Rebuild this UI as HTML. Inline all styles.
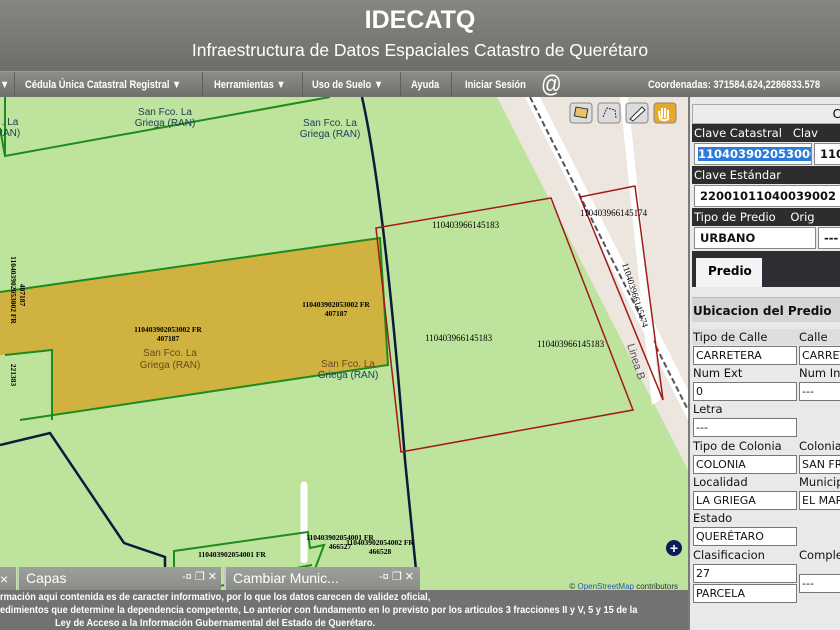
<!DOCTYPE html>
<html><head><meta charset="utf-8"><style>
*{margin:0;padding:0;box-sizing:border-box}
body{width:840px;height:630px;overflow:hidden;font-family:"Liberation Sans",sans-serif;background:#6e6f6a;position:relative}
#hdr{position:absolute;left:0;top:0;width:840px;height:71px;background:linear-gradient(#868782,#6d6e69);color:#fff;text-align:center}
#hdr h1{position:absolute;left:0;right:0;top:6px;font-size:25px;font-weight:bold}
#hdr h2{position:absolute;left:0;right:0;top:40px;font-size:17.5px;font-weight:normal}
#nav{position:absolute;left:0;top:71px;width:840px;height:26px;background:linear-gradient(#8d8e89,#6f706b);color:#fff;font-size:11px;font-weight:bold;border-top:1px solid #999}
#nav span{position:absolute;top:7px;transform:scaleX(.85);transform-origin:left;white-space:nowrap}
#nav i{position:absolute;top:0;width:1px;height:26px;background:#5f605b}
#map{position:absolute;left:0;top:97px;width:688px;height:493px;overflow:hidden}
#foot{position:absolute;left:0;top:590px;width:688px;height:40px;background:#727370;color:#fff;font-size:10.5px;font-weight:bold;line-height:13px}
#foot div{position:absolute;white-space:nowrap;transform:scaleX(.88);transform-origin:left}
.win{position:absolute;top:567px;height:23px;background:linear-gradient(#9ea09c,#8a8c88);color:#fff;font-size:14px;border-left:2px solid #bfc9c7}
#panel{position:absolute;left:688px;top:97px;width:152px;height:533px;background:#e9e9e9;border-left:2px solid #7a7a7a;overflow:hidden;font-family:"DejaVu Sans",sans-serif;font-size:11.5px}
.dk{position:absolute;left:2px;width:150px;height:18px;background:#2d2d2d;color:#fff;line-height:18px;padding-left:2px;white-space:nowrap}
.in{position:absolute;height:22px;background:#fff;border:1px solid #888;font-weight:bold;line-height:20px;padding-left:5px;color:#111;overflow:hidden;white-space:nowrap}
.lb{position:absolute;color:#111;font-size:11.5px;white-space:nowrap}
.fi{position:absolute;height:19px;background:#fff;border:1px solid #777;color:#111;font-size:11px;line-height:17px;padding-left:2px;white-space:nowrap;overflow:hidden}
</style></head><body>
<div id="hdr"><h1>IDECATQ</h1><h2>Infraestructura de Datos Espaciales Catastro de Querétaro</h2></div>
<div id="nav">
<span style="left:0">▼</span><i style="left:14px"></i>
<span style="left:25px">Cédula Única Catastral Registral ▼</span><i style="left:202px"></i>
<span style="left:214px">Herramientas ▼</span><i style="left:302px"></i>
<span style="left:312px">Uso de Suelo ▼</span><i style="left:400px"></i>
<span style="left:411px">Ayuda</span><i style="left:451px"></i>
<span style="left:465px">Iniciar Sesión</span>
<span style="left:541px;top:-1px;font-size:24px;font-weight:normal">@</span>
<span style="left:648px">Coordenadas: 371584.624,2286833.578</span>
</div>
<div id="map">
<svg width="688" height="493" viewBox="0 97 688 493" font-family="Liberation Serif">
<rect x="0" y="97" width="688" height="493" fill="#bde39c"/>
<polygon points="497,97 688,97 688,470" fill="#ece6df"/>
<polygon points="525,97 540,97 688,390 688,420" fill="#fff"/>
<line x1="530" y1="97" x2="688" y2="410" stroke="#555" stroke-width="2" stroke-dasharray="6,3"/>
<polygon points="620,97 628,97 660,400 652,405" fill="#fff"/>
<line x1="304" y1="485" x2="304" y2="560" stroke="#fff" stroke-width="7" stroke-linecap="round"/>
<polygon points="0,292 380,238 388,365 20,420 0,420" fill="#cfb23f"/>
<polygon points="0,355 52,350 52,420 0,425" fill="#bde39c"/>
<polyline points="0,292 380,238 388,365 20,420" fill="none" stroke="#1d8c1d" stroke-width="2"/>
<polyline points="0,128 5,156 330,97" fill="none" stroke="#1d8c1d" stroke-width="2"/>
<polyline points="5,355 52,350 52,420" fill="none" stroke="#1d8c1d" stroke-width="2"/>
<polyline points="5,97 5,156" fill="none" stroke="#1d8c1d" stroke-width="2"/>
<polyline points="174,590 174,551 308,532 310,548 324,545 312,577 174,590" fill="none" stroke="#1d8c1d" stroke-width="2"/>
<polyline points="245,578 312,565" fill="none" stroke="#1d8c1d" stroke-width="2"/>
<path d="M362,97 Q385,200 405,460 L418,590" fill="none" stroke="#0d1a3a" stroke-width="2.5"/>
<polyline points="0,445 50,433 124,543 165,557 165,590" fill="none" stroke="#0d1a3a" stroke-width="2.5"/>
<polygon points="376,228 551,198 633,410 401,452" fill="none" stroke="#a01a1a" stroke-width="1.5"/>
<polygon points="580,197 635,186 663,400" fill="none" stroke="#a01a1a" stroke-width="1.5"/>
<g font-size="9" fill="#000">
<text x="432" y="228">110403966145183</text>
<text x="425" y="341">110403966145183</text>
<text x="537" y="347">110403966145183</text>
<text x="580" y="216">110403966145174</text>
<text transform="translate(622,264) rotate(72)">110403966145174</text>
<g font-weight="bold" font-size="7.5" text-anchor="middle">
<text x="168" y="332">110403902053002 FR</text><text x="168" y="341">407187</text>
<text x="336" y="307">110403902053002 FR</text><text x="336" y="316">407187</text>
<text x="232" y="557">110403902054001 FR</text>
<text x="340" y="540">110403902054001 FR</text><text x="340" y="549">466527</text>
<text x="380" y="545">110403902054002 FR</text><text x="380" y="554">466528</text>
<text transform="translate(11,290) rotate(90)">110403902053002 FR</text>
<text transform="translate(20,295) rotate(90)">407187</text>
<text transform="translate(11,375) rotate(90)">221383</text>
</g></g>
<g font-family="Liberation Sans" font-size="10" text-anchor="middle">
<text x="165" y="115" fill="#1c3c5c">San Fco. La</text><text x="165" y="126" fill="#1c3c5c">Griega (RAN)</text>
<text x="330" y="126" fill="#1c3c5c">San Fco. La</text><text x="330" y="137" fill="#1c3c5c">Griega (RAN)</text>
<text x="10" y="125" fill="#1c3c5c">. La</text><text x="8" y="136" fill="#1c3c5c">RAN)</text>
<text x="170" y="356" fill="#6b4a1a">San Fco. La</text><text x="170" y="368" fill="#6b4a1a">Griega (RAN)</text>
<text x="348" y="367" fill="#6b4a1a">San Fco. La</text><text x="348" y="378" fill="#1c3c5c">Griega (RAN)</text>
</g>
<text transform="translate(627,345) rotate(72)" font-family="Liberation Sans" font-size="11" fill="#555">Linea B</text>
<g transform="translate(570,103)">
<rect width="22" height="20" rx="3" fill="#ddd" stroke="#888"/><rect x="5" y="5" width="12" height="9" fill="#e9c36a" stroke="#333" transform="rotate(10 11 10)"/>
<rect x="28" width="22" height="20" rx="3" fill="#ddd" stroke="#888"/><path d="M33,14 L37,5 L45,7 L46,15" fill="none" stroke="#333" stroke-dasharray="2,1"/>
<rect x="56" width="22" height="20" rx="3" fill="#ddd" stroke="#888"/><path d="M60,16 L72,4 L75,7 L63,18Z" fill="#fff" stroke="#333"/>
<rect x="84" width="22" height="20" rx="3" fill="#e8a92a" stroke="#888"/><path d="M90,16 L89,8 M92,15 L92,5 M95,15 L95,5 M98,15 L98,7 M90,16 Q95,19 99,15" stroke="#fff" stroke-width="2" fill="none"/>
</g>
<circle cx="674" cy="548" r="8" fill="#0d1a5a"/><text x="674" y="553" fill="#fff" font-size="14" font-weight="bold" text-anchor="middle" font-family="Liberation Sans">+</text>
<text x="678" y="589" font-family="Liberation Sans" font-size="8" fill="#333" text-anchor="end">© <tspan fill="#2a5aa8">OpenStreetMap</tspan> contributors</text>
</svg>
</div>
<div class="win" style="left:0;width:16px;border:none"><span style="position:absolute;left:0;top:4px">×</span></div>
<div class="win" style="left:17px;width:204px"><span style="position:absolute;left:7px;top:3px">Capas</span><span style="position:absolute;left:163px;top:3px;font-size:11px">-¤ ❐ ✕</span></div>
<div class="win" style="left:224px;width:196px"><span style="position:absolute;left:7px;top:3px">Cambiar Munic...</span><span style="position:absolute;left:153px;top:3px;font-size:11px">-¤ ❐ ✕</span></div>
<div id="foot">
<div style="left:0;top:1px">rmación aqui contenida es de caracter informativo, por lo que los datos carecen de validez oficial,</div>
<div style="left:0;top:14px">edimientos que determine la dependencia competente, Lo anterior con fundamento en lo previsto por los articulos 3 fracciones II y V, 5 y 15 de la</div>
<div style="left:55px;top:27px">Ley de Acceso a la Información Gubernamental del Estado de Querétaro.</div>
</div>
<div id="panel">
<div style="position:absolute;left:2px;top:7px;width:150px;height:20px;background:#ececec;border:1px solid #aaa;text-align:right;line-height:18px;font-size:12px">C</div>
<div class="dk" style="top:27px">Clave Catastral&nbsp;&nbsp;&nbsp;Clav</div>
<div class="in" style="left:4px;top:46px;width:118px;color:#fff;padding-left:3px"><span style="background:#2c7bd8">110403902053000</span></div>
<div class="in" style="left:124px;top:46px;width:40px">110</div>
<div class="dk" style="top:69px">Clave Estándar</div>
<div class="in" style="left:4px;top:88px;width:160px">22001011040039002</div>
<div class="dk" style="top:111px">Tipo de Predio&nbsp;&nbsp;&nbsp;&nbsp;Orig</div>
<div class="in" style="left:4px;top:130px;width:122px">URBANO</div>
<div class="in" style="left:128px;top:130px;width:40px">---</div>
<div style="position:absolute;left:2px;top:154px;width:150px;height:36px;background:#2d2d33"></div>
<div style="position:absolute;left:6px;top:161px;width:66px;height:29px;background:#f4f4f4;font-weight:bold;font-size:12px;line-height:27px;padding-left:12px">Predio</div>
<div style="position:absolute;left:2px;top:200px;width:150px;height:25px;background:#d5d5d5;border-top:1px solid #bbb"></div>
<div class="lb" style="left:3px;top:207px;font-weight:bold;font-size:12px">Ubicacion del Predio</div>
<div style="position:absolute;left:2px;top:232px;width:150px;height:16px;background:#dedede"></div>
<div class="lb" style="left:3px;top:233px">Tipo de Calle</div><div class="lb" style="left:109px;top:233px">Calle</div>
<div class="fi" style="left:3px;top:249px;width:104px">CARRETERA</div><div class="fi" style="left:109px;top:249px;width:50px">CARRET</div>
<div class="lb" style="left:3px;top:269px">Num Ext</div><div class="lb" style="left:109px;top:269px">Num In</div>
<div class="fi" style="left:3px;top:285px;width:104px">0</div><div class="fi" style="left:109px;top:285px;width:50px">---</div>
<div class="lb" style="left:3px;top:305px">Letra</div>
<div class="fi" style="left:3px;top:321px;width:104px">---</div>
<div class="lb" style="left:3px;top:342px">Tipo de Colonia</div><div class="lb" style="left:109px;top:342px">Colonia</div>
<div class="fi" style="left:3px;top:358px;width:104px">COLONIA</div><div class="fi" style="left:109px;top:358px;width:50px">SAN FR</div>
<div class="lb" style="left:3px;top:378px">Localidad</div><div class="lb" style="left:109px;top:378px">Municip</div>
<div class="fi" style="left:3px;top:394px;width:104px">LA GRIEGA</div><div class="fi" style="left:109px;top:394px;width:50px">EL MAR</div>
<div class="lb" style="left:3px;top:414px">Estado</div>
<div class="fi" style="left:3px;top:430px;width:104px">QUERÉTARO</div>
<div class="lb" style="left:3px;top:451px">Clasificacion</div><div class="lb" style="left:109px;top:451px">Comple</div>
<div class="fi" style="left:3px;top:467px;width:104px">27</div>
<div class="fi" style="left:109px;top:477px;width:50px">---</div>
<div class="fi" style="left:3px;top:487px;width:104px">PARCELA</div>
</div>
</body></html>
